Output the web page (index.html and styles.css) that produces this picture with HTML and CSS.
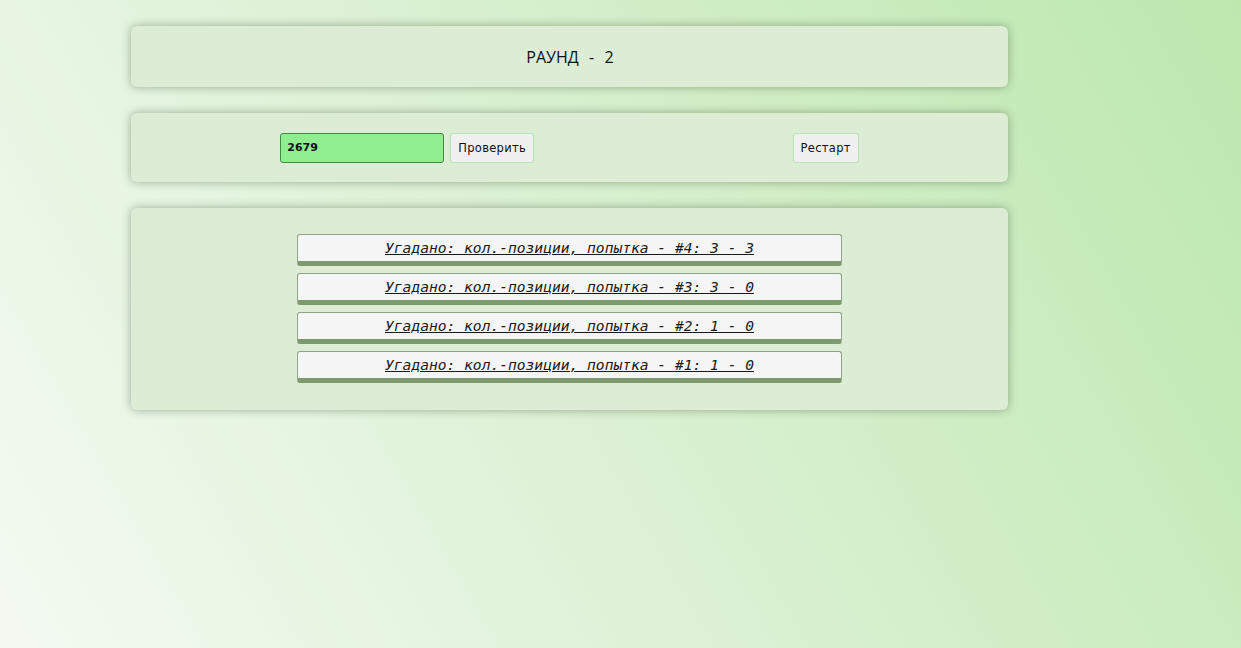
FILE: index.html
```html
<!DOCTYPE html>
<html lang="ru">
<head>
<meta charset="utf-8">
<title>Быки и коровы</title>
<link rel="stylesheet" href="styles.css">
</head>
<body>
<main class="app">
  <section class="panel panel-title">
    <h1 class="round">РАУНД&nbsp; -&nbsp; 2</h1>
  </section>
  <section class="panel panel-controls">
    <div class="group">
      <input class="guess" type="text" value="2679">
      <button class="btn" type="button">Проверить</button>
    </div>
    <div class="group">
      <button class="btn" type="button">Рестарт</button>
    </div>
  </section>
  <section class="panel panel-list">
    <ul class="attempts">
      <li class="attempt"><span>Угадано: кол.-позиции, попытка - #4: 3 - 3</span></li>
      <li class="attempt"><span>Угадано: кол.-позиции, попытка - #3: 3 - 0</span></li>
      <li class="attempt"><span>Угадано: кол.-позиции, попытка - #2: 1 - 0</span></li>
      <li class="attempt"><span>Угадано: кол.-позиции, попытка - #1: 1 - 0</span></li>
    </ul>
  </section>
</main>
</body>
</html>
```

FILE: styles.css
```css
html, body {
  margin: 0;
  padding: 0;
  height: 100%;
}
body {
  background: linear-gradient(60deg, #f4faf2 0%, #dcf1d4 45%, #bce8ae 100%);
  font-family: "Open Sans", "Noto Sans", sans-serif;
  color: #111;
  overflow: hidden;
}
.app {
  width: 877px;
  margin-left: 131px;
  padding-top: 26px;
  display: flex;
  flex-direction: column;
  gap: 26px;
}
.panel {
  background: #dcecd5;
  border-radius: 6px;
  box-shadow: 0 0 10px rgba(50, 70, 40, 0.42);
}
.panel-title {
  height: 61px;
  display: flex;
  align-items: center;
  justify-content: center;
}
.round {
  margin: 0 0 0 1px;
  font-size: 16px;
  font-weight: 400;
  word-spacing: 1px;
}
.panel-controls {
  height: 69px;
  padding: 0 20px;
  box-sizing: border-box;
  display: flex;
  align-items: center;
  justify-content: space-around;
}
.group {
  display: flex;
  align-items: center;
  gap: 6px;
}
.guess {
  width: 164px;
  height: 30px;
  box-sizing: border-box;
  margin: 0;
  padding: 0 6px;
  background: #90ee90;
  border: 1px solid #3f8d3f;
  border-radius: 3px;
  font-family: "DejaVu Sans", sans-serif;
  font-size: 11px;
  font-weight: 700;
  color: #111;
  outline: none;
}
.btn {
  height: 30px;
  box-sizing: border-box;
  margin: 0;
  padding: 0 7px;
  background: #f0f0f0;
  border: 1px solid #b4e6b0;
  border-radius: 3px;
  font-family: "DejaVu Sans", sans-serif;
  font-size: 11.5px;
  letter-spacing: 0.3px;
  color: #111;
}
.panel-list {
  padding: 26px 0 27px;
}
.attempts {
  list-style: none;
  margin: 0 auto;
  padding: 0;
  width: 545px;
  display: flex;
  flex-direction: column;
  gap: 7px;
}
.attempt {
  height: 32px;
  box-sizing: border-box;
  background: #f5f5f5;
  border: 1px solid #8da383;
  border-bottom: 5px solid #7c9a6e;
  border-radius: 3px;
  display: flex;
  align-items: center;
  justify-content: center;
  font-family: "DejaVu Sans Mono", monospace;
  font-style: italic;
  font-size: 14.6px;
  color: #1a1a1a;
  text-decoration: underline;
}
.attempt span {
  padding-bottom: 1px;
}
```
